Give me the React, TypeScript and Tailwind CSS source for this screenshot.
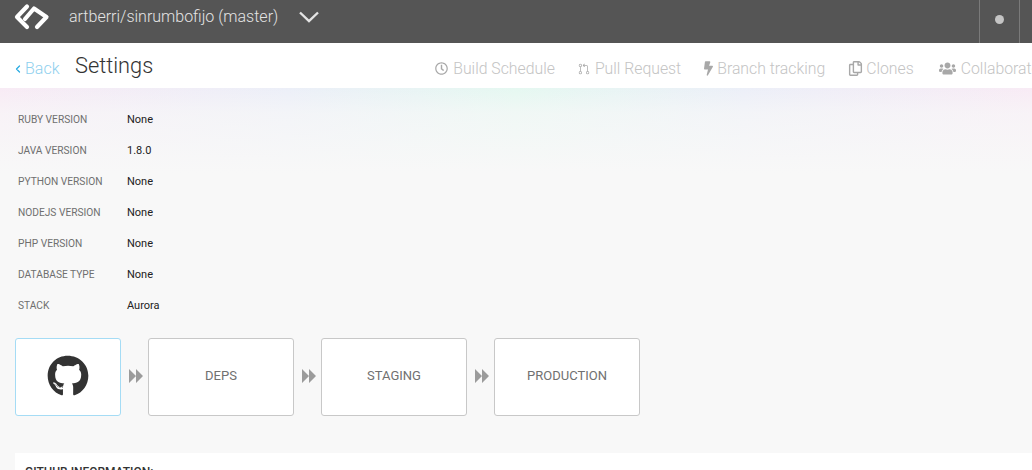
import { ChevronLeft } from "lucide-react";
import { FaBolt, FaGithub, FaRegClock, FaRegCopy, FaUsers } from "react-icons/fa";
import { GoGitPullRequest } from "react-icons/go";

const settings = [
  ["RUBY VERSION", "None"],
  ["JAVA VERSION", "1.8.0"],
  ["PYTHON VERSION", "None"],
  ["NODEJS VERSION", "None"],
  ["PHP VERSION", "None"],
  ["DATABASE TYPE", "None"],
  ["STACK", "Aurora"],
];

const Arrow = () => (
  <div className="flex w-[27px] shrink-0 pb-[2px] pl-[8px]">
    <svg width="14" height="14" viewBox="0 0 14 14" className="fill-[#9b9b9b]">
      <path d="M0 0 L7 7 L0 14 Z M7 0 L14 7 L7 14 Z" />
    </svg>
  </div>
);

const Stage = ({ label }: { label: string }) => (
  <div className="flex h-[78px] w-[146px] items-center justify-center rounded-[3px] border border-[#c8c8c8] bg-white pb-[2px] text-[13px] text-[#707070]">
    {label}
  </div>
);

export default function App() {
  return (
    <div className="h-[470px] w-[1032px] overflow-hidden bg-[#f8f8f8] font-['Roboto',sans-serif]">
      <header className="flex h-[43px] items-center bg-[#555555] text-[#e4e4e4]">
        <div className="flex items-center pb-[9px]">
          <svg width="36" height="28" viewBox="0 0 36 28" className="ml-[14px] shrink-0" fill="none" stroke="#fff" strokeWidth="4.2" strokeLinecap="round" strokeLinejoin="round">
            <path d="M13 3.5 L3 14 L13 24" />
            <path d="M11 16 L20 5.5 L32.5 14 L23 24" />
          </svg>
          <span className="ml-[19px] text-[16px] font-light">artberri/sinrumbofijo (master)</span>
          <svg width="20" height="12" viewBox="0 0 20 12" className="ml-[21px]" fill="none" stroke="#e4e4e4" strokeWidth="2.4">
            <path d="M1 1.5 L10 10 L19 1.5" />
          </svg>
        </div>
        <div className="ml-auto mr-[12px] flex h-full w-[41px] items-center justify-center border-x border-[#7a7a7a] pb-[5px]">
          <span className="h-[9px] w-[9px] rounded-full bg-[#c4c4c4]" />
        </div>
      </header>

      <nav className="flex h-[45px] items-center overflow-hidden bg-white">
        <div className="ml-[15px] mt-[6px] flex w-[60px] shrink-0 items-center font-light text-[#8fd0ee]">
          <ChevronLeft size={12} strokeWidth={2.5} className="-ml-[3px] text-[#29abe2]" />
          <span className="ml-[1px] text-[16px]">Back</span>
        </div>
        <h1 className="text-[21.8px] font-light leading-none text-[#333333]">Settings</h1>
        <div className="ml-[282px] mt-[6px] flex shrink-0 items-center gap-[23px] whitespace-nowrap text-[15.8px] font-light text-[#c4c4c4]">
          <span className="flex items-center gap-[5px]"><FaRegClock size={13} className="text-[#a8a8a8]" />Build Schedule</span>
          <span className="flex items-center gap-[5px]"><GoGitPullRequest className="h-[16px] w-[12px] text-[#a8a8a8]" />Pull Request</span>
          <span className="flex items-center gap-[4px]"><FaBolt className="h-[15px] w-[9px] text-[#a8a8a8]" />Branch tracking</span>
          <span className="mr-[2px] flex items-center gap-[3px]"><FaRegCopy size={15} className="text-[#a8a8a8]" />Clones</span>
          <span className="flex items-center gap-[5px]"><FaUsers size={17} className="text-[#a8a8a8]" />Collaborators</span>
        </div>
      </nav>

      <main className="bg-[linear-gradient(to_bottom,rgba(248,248,248,0)_0px,rgba(248,248,248,0.6)_25px,#f8f8f8_85px),linear-gradient(to_right,#f8ebf5_0%,#eceff8_28%,#e5f8f1_50%,#eceff8_72%,#f8ebf5_100%)] bg-no-repeat pl-[15px] pt-[16px]">
        <dl className="flex flex-col">
          {settings.map(([name, value]) => (
            <div key={name} className="flex h-[31px] items-center pl-[3px]">
              <dt className="w-[109px] text-[10.2px] text-[#6f6f6f]">{name}</dt>
              <dd className="mt-[1px] text-[11px] text-[#222222]">{value}</dd>
            </div>
          ))}
        </dl>

        <div className="mt-[17px] flex items-center">
          <div className="flex h-[78px] w-[106px] items-center justify-center rounded-[3px] border border-[#a5dcf5] bg-white pb-[2px]">
            <FaGithub size={42} className="text-[#333333]" />
          </div>
          <Arrow />
          <Stage label="DEPS" />
          <Arrow />
          <Stage label="STAGING" />
          <Arrow />
          <Stage label="PRODUCTION" />
        </div>

        <section className="mt-[37px] h-[40px] bg-white px-[10px] pt-[10px] text-[12px] font-medium text-[#333333]">
          GITHUB INFORMATION:
        </section>
      </main>
    </div>
  );
}
